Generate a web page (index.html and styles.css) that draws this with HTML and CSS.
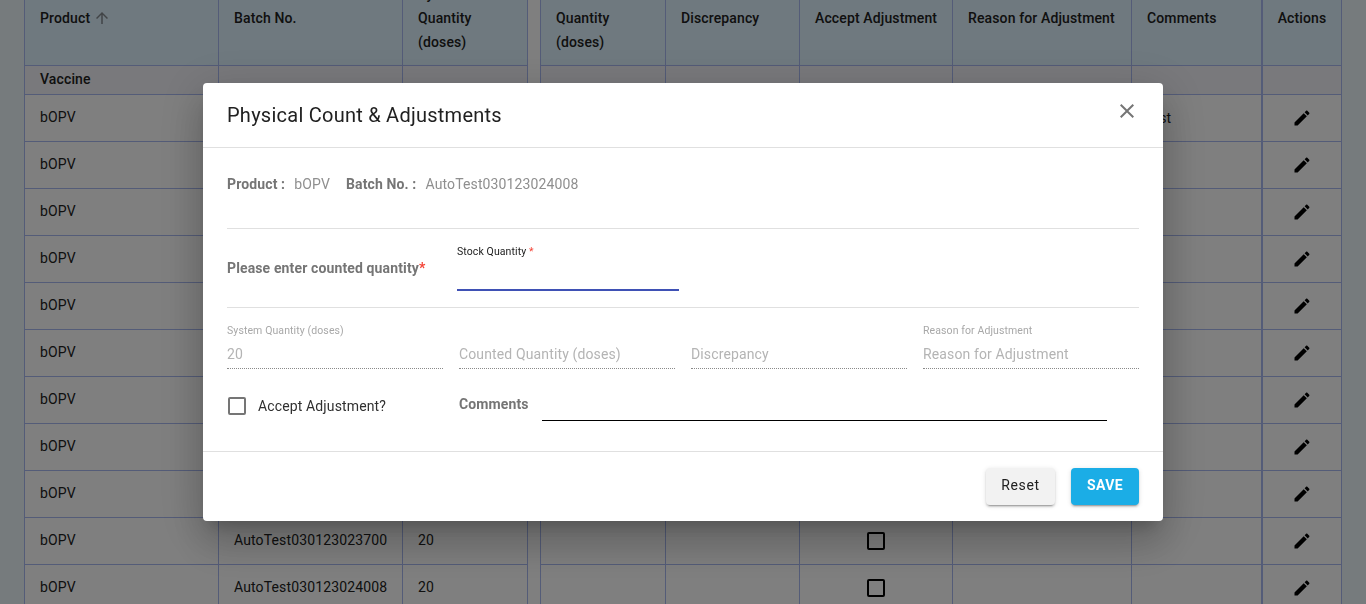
FILE: index.html
```html
<!DOCTYPE html>
<html lang="en">
<head>
<meta charset="utf-8">
<title>Physical Count &amp; Adjustments</title>
<link rel="stylesheet" href="styles.css">
</head>
<body>
<main class="sheet">
  <table class="grid grid-left">
    <colgroup><col class="c-product"><col class="c-batch"><col class="c-qty"></colgroup>
    <thead><tr>
      <th>Product <svg class="sort" viewBox="0 0 24 24"><path d="M4 12l1.41 1.41L11 7.83V20h2V7.83l5.58 5.59L20 12l-8-8-8 8z"/></svg></th>
      <th>Batch No.</th>
      <th class="tall">System<br>Quantity<br>(doses)</th>
    </tr></thead>
    <tbody>
      <tr class="group"><td>Vaccine</td><td></td><td></td></tr>
      <tr><td>bOPV</td><td>AutoTest030123021500</td><td>20</td></tr>
      <tr><td>bOPV</td><td>AutoTest030123021700</td><td>20</td></tr>
      <tr><td>bOPV</td><td>AutoTest030123021900</td><td>20</td></tr>
      <tr><td>bOPV</td><td>AutoTest030123022100</td><td>20</td></tr>
      <tr><td>bOPV</td><td>AutoTest030123022300</td><td>20</td></tr>
      <tr><td>bOPV</td><td>AutoTest030123022500</td><td>20</td></tr>
      <tr><td>bOPV</td><td>AutoTest030123022900</td><td>20</td></tr>
      <tr><td>bOPV</td><td>AutoTest030123023100</td><td>20</td></tr>
      <tr><td>bOPV</td><td>AutoTest030123023400</td><td>20</td></tr>
      <tr><td>bOPV</td><td>AutoTest030123023700</td><td>20</td></tr>
      <tr><td>bOPV</td><td>AutoTest030123024008</td><td>20</td></tr>
    </tbody>
  </table>
  <table class="grid grid-mid">
    <colgroup><col class="c-counted"><col class="c-disc"><col class="c-accept"><col class="c-reason"><col class="c-comments"></colgroup>
    <thead><tr>
      <th class="tall">Counted<br>Quantity<br>(doses)</th>
      <th>Discrepancy</th>
      <th>Accept Adjustment</th>
      <th>Reason for Adjustment</th>
      <th>Comments</th>
    </tr></thead>
    <tbody>
      <tr class="group"><td></td><td></td><td></td><td></td><td></td></tr>
      <tr><td></td><td></td><td class="mid"><input class="tick" type="checkbox"></td><td></td><td>test</td></tr>
      <tr><td></td><td></td><td class="mid"><input class="tick" type="checkbox"></td><td></td><td></td></tr>
      <tr><td></td><td></td><td class="mid"><input class="tick" type="checkbox"></td><td></td><td></td></tr>
      <tr><td></td><td></td><td class="mid"><input class="tick" type="checkbox"></td><td></td><td></td></tr>
      <tr><td></td><td></td><td class="mid"><input class="tick" type="checkbox"></td><td></td><td></td></tr>
      <tr><td></td><td></td><td class="mid"><input class="tick" type="checkbox"></td><td></td><td></td></tr>
      <tr><td></td><td></td><td class="mid"><input class="tick" type="checkbox"></td><td></td><td></td></tr>
      <tr><td></td><td></td><td class="mid"><input class="tick" type="checkbox"></td><td></td><td></td></tr>
      <tr><td></td><td></td><td class="mid"><input class="tick" type="checkbox"></td><td></td><td></td></tr>
      <tr><td></td><td></td><td class="mid"><input class="tick" type="checkbox"></td><td></td><td></td></tr>
      <tr><td></td><td></td><td class="mid"><input class="tick" type="checkbox"></td><td></td><td></td></tr>
    </tbody>
  </table>
  <table class="grid grid-right">
    <thead><tr><th class="mid">Actions</th></tr></thead>
    <tbody>
      <tr class="group"><td></td></tr>
      <tr><td class="mid"><svg class="pen" viewBox="0 0 24 24"><path d="M3 17.25V21h3.75L17.81 9.94l-3.75-3.75L3 17.25zM20.71 7.04c.39-.39.39-1.02 0-1.41l-2.34-2.34c-.39-.39-1.02-.39-1.41 0l-1.83 1.83 3.75 3.75 1.83-1.83z"/></svg></td></tr>
      <tr><td class="mid"><svg class="pen" viewBox="0 0 24 24"><path d="M3 17.25V21h3.75L17.81 9.94l-3.75-3.75L3 17.25zM20.71 7.04c.39-.39.39-1.02 0-1.41l-2.34-2.34c-.39-.39-1.02-.39-1.41 0l-1.83 1.83 3.75 3.75 1.83-1.83z"/></svg></td></tr>
      <tr><td class="mid"><svg class="pen" viewBox="0 0 24 24"><path d="M3 17.25V21h3.75L17.81 9.94l-3.75-3.75L3 17.25zM20.71 7.04c.39-.39.39-1.02 0-1.41l-2.34-2.34c-.39-.39-1.02-.39-1.41 0l-1.83 1.83 3.75 3.75 1.83-1.83z"/></svg></td></tr>
      <tr><td class="mid"><svg class="pen" viewBox="0 0 24 24"><path d="M3 17.25V21h3.75L17.81 9.94l-3.75-3.75L3 17.25zM20.71 7.04c.39-.39.39-1.02 0-1.41l-2.34-2.34c-.39-.39-1.02-.39-1.41 0l-1.83 1.83 3.75 3.75 1.83-1.83z"/></svg></td></tr>
      <tr><td class="mid"><svg class="pen" viewBox="0 0 24 24"><path d="M3 17.25V21h3.75L17.81 9.94l-3.75-3.75L3 17.25zM20.71 7.04c.39-.39.39-1.02 0-1.41l-2.34-2.34c-.39-.39-1.02-.39-1.41 0l-1.83 1.83 3.75 3.75 1.83-1.83z"/></svg></td></tr>
      <tr><td class="mid"><svg class="pen" viewBox="0 0 24 24"><path d="M3 17.25V21h3.75L17.81 9.94l-3.75-3.75L3 17.25zM20.71 7.04c.39-.39.39-1.02 0-1.41l-2.34-2.34c-.39-.39-1.02-.39-1.41 0l-1.83 1.83 3.75 3.75 1.83-1.83z"/></svg></td></tr>
      <tr><td class="mid"><svg class="pen" viewBox="0 0 24 24"><path d="M3 17.25V21h3.75L17.81 9.94l-3.75-3.75L3 17.25zM20.71 7.04c.39-.39.39-1.02 0-1.41l-2.34-2.34c-.39-.39-1.02-.39-1.41 0l-1.83 1.83 3.75 3.75 1.83-1.83z"/></svg></td></tr>
      <tr><td class="mid"><svg class="pen" viewBox="0 0 24 24"><path d="M3 17.25V21h3.75L17.81 9.94l-3.75-3.75L3 17.25zM20.71 7.04c.39-.39.39-1.02 0-1.41l-2.34-2.34c-.39-.39-1.02-.39-1.41 0l-1.83 1.83 3.75 3.75 1.83-1.83z"/></svg></td></tr>
      <tr><td class="mid"><svg class="pen" viewBox="0 0 24 24"><path d="M3 17.25V21h3.75L17.81 9.94l-3.75-3.75L3 17.25zM20.71 7.04c.39-.39.39-1.02 0-1.41l-2.34-2.34c-.39-.39-1.02-.39-1.41 0l-1.83 1.83 3.75 3.75 1.83-1.83z"/></svg></td></tr>
      <tr><td class="mid"><svg class="pen" viewBox="0 0 24 24"><path d="M3 17.25V21h3.75L17.81 9.94l-3.75-3.75L3 17.25zM20.71 7.04c.39-.39.39-1.02 0-1.41l-2.34-2.34c-.39-.39-1.02-.39-1.41 0l-1.83 1.83 3.75 3.75 1.83-1.83z"/></svg></td></tr>
      <tr><td class="mid"><svg class="pen" viewBox="0 0 24 24"><path d="M3 17.25V21h3.75L17.81 9.94l-3.75-3.75L3 17.25zM20.71 7.04c.39-.39.39-1.02 0-1.41l-2.34-2.34c-.39-.39-1.02-.39-1.41 0l-1.83 1.83 3.75 3.75 1.83-1.83z"/></svg></td></tr>
    </tbody>
  </table>
</main>

<div class="backdrop">
  <section class="dialog" role="dialog" aria-label="Physical Count &amp; Adjustments">
    <header class="dialog-head">
      <h2 class="dialog-title">Physical Count &amp; Adjustments</h2>
      <svg class="close" viewBox="0 0 24 24"><path d="M19 6.41L17.59 5 12 10.59 6.41 5 5 6.41 10.59 12 5 17.59 6.41 19 12 13.41 17.59 19 19 17.59 13.41 12z"/></svg>
    </header>
    <div class="dialog-body">
      <div class="info-row">
        <b class="key">Product :</b><span class="val">bOPV</span>
        <b class="key">Batch No. :</b><span class="val">AutoTest030123024008</span>
      </div>
      <div class="count-row">
        <div class="count-label">Please enter counted quantity<span class="req">*</span></div>
        <label class="stock">
          <span class="stock-label">Stock Quantity <span class="req-light">*</span></span>
          <input class="stock-input" type="text">
        </label>
      </div>
      <div class="fields">
        <div class="field"><span class="field-label">System Quantity (doses)</span><span class="field-value">20</span></div>
        <div class="field"><span class="field-label"></span><span class="field-value">Counted Quantity (doses)</span></div>
        <div class="field"><span class="field-label"></span><span class="field-value">Discrepancy</span></div>
        <div class="field"><span class="field-label">Reason for Adjustment</span><span class="field-value">Reason for Adjustment</span></div>
      </div>
      <div class="accept-row">
        <label class="accept"><input class="tick tick-grey" type="checkbox"><span>Accept Adjustment?</span></label>
        <b class="comments-label">Comments</b>
        <input class="comments-input" type="text">
      </div>
    </div>
    <footer class="dialog-foot">
      <button class="btn btn-reset" type="button">Reset</button>
      <button class="btn btn-save" type="button">SAVE</button>
    </footer>
  </section>
</div>
</body>
</html>
```
FILE: styles.css
```css
* { box-sizing: border-box; }
html, body { margin: 0; height: 100%; overflow: hidden; }
body {
  background: #ecf6fb;
  font-family: Roboto, "Liberation Sans", sans-serif;
  font-size: 14px;
  letter-spacing: .13px;
  color: #212121;
}

/* background tables, scrolled slightly */
.sheet {
  display: flex;
  align-items: flex-start;
  width: 1318px;
  margin: -18px 24px 0;
  background: #fff;
}
.grid {
  flex: none;
  table-layout: fixed;
  border-collapse: separate;
  border-spacing: 0;
  border-left: 1px solid #a8b8f0;
}
.grid-left { width: 504px; margin-right: 12px; }
.grid-mid { width: 722px; }
.grid-right { width: 80px; }
.c-product { width: 194px; }
.c-batch { width: 184px; }
.c-qty { width: 125px; }
.c-counted { width: 125px; }
.c-disc { width: 134px; }
.c-accept { width: 153px; }
.c-reason { width: 179px; }
.c-comments { width: 130px; }

.grid th, .grid td {
  border-right: 1px solid #a8b8f0;
  border-bottom: 1px solid #a8b8f0;
  padding: 0 0 0 15px;
  text-align: left;
  overflow: hidden;
  white-space: nowrap;
}
.grid th {
  height: 84px;
  padding-top: 24px;
  vertical-align: top;
  background: #dff2fe;
  font-weight: 500;
  line-height: 24px;
  color: #212121;
}
.grid th.tall { padding-top: 0; }
.grid td { height: 47px; vertical-align: middle; line-height: 20px; }
.grid-left td { padding-bottom: 2px; }
.grid .group td { height: 29px; background: #f2f2f8; font-weight: 500; }
.grid th.mid, .grid td.mid { padding: 0; text-align: center; }
.grid th.mid { padding-top: 24px; }

.sort { width: 18px; height: 18px; margin-left: -1px; vertical-align: -4px; fill: #83898e; }
.pen { display: block; width: 20px; height: 20px; margin: 0 auto; fill: #000; }

.tick {
  appearance: none;
  display: block;
  width: 18px;
  height: 18px;
  margin: 0 auto;
  border: 2px solid #000;
  border-radius: 2px;
  background: transparent;
}
.tick-grey { margin: 0; border-color: #757575; }

/* modal */
.backdrop {
  position: fixed;
  inset: 0;
  display: flex;
  align-items: center;
  justify-content: center;
  background: rgba(0, 0, 0, .5);
}
.dialog {
  width: 960px;
  height: 438px;
  background: #fff;
  border-radius: 4px;
  box-shadow: 0 11px 15px -7px rgba(0,0,0,.2), 0 24px 38px 3px rgba(0,0,0,.14), 0 9px 46px 8px rgba(0,0,0,.12);
  display: flex;
  flex-direction: column;
}
.dialog-head {
  display: flex;
  align-items: flex-start;
  justify-content: space-between;
  height: 65px;
  padding: 16px 24px 0;
  border-bottom: 1px solid #e0e0e0;
}
.dialog-title {
  margin: 0;
  font-size: 20px;
  font-weight: 400;
  line-height: 32px;
  letter-spacing: .25px;
  color: #212121;
}
.close { width: 24px; height: 24px; fill: #757575; }

.dialog-body { flex: 1; padding: 0 24px; }
.info-row {
  display: flex;
  height: 81px;
  padding-top: 26px;
  line-height: 20px;
  border-bottom: 1px solid #e0e0e0;
}
.key { font-weight: 700; color: #757575; margin-right: 9px; }
.val { color: #8f8f8f; margin-right: 16px; }

.count-row {
  display: flex;
  height: 79px;
  border-bottom: 1px solid #e0e0e0;
}
.count-label {
  width: 230px;
  padding-top: 29px;
  line-height: 20px;
  font-weight: 700;
  color: #757575;
}
.req { color: #f44336; }
.stock { display: flex; flex-direction: column; width: 222px; }
.stock-label {
  height: 32px;
  padding-top: 16px;
  font-size: 10.5px;
  line-height: 14px;
  letter-spacing: .1px;
  color: #212121;
}
.req-light { color: #f44336; }
.stock-input {
  height: 30px;
  border: 0;
  border-bottom: 2px solid #3f51b5;
  outline: 0;
  background: none;
}

.fields {
  display: grid;
  grid-template-columns: repeat(4, 1fr);
  gap: 16px;
  padding-top: 16px;
}
.field {
  display: flex;
  flex-direction: column;
  height: 45px;
  border-bottom: 1px dotted #8a8a8a;
}
.field-label {
  height: 14px;
  font-size: 10.5px;
  line-height: 14px;
  letter-spacing: .1px;
  color: #a8a8a8;
}
.field-value {
  margin-top: 4px;
  line-height: 24px;
  color: #b4b4b4;
}

.accept-row {
  display: flex;
  align-items: flex-start;
  margin-top: 19px;
  height: 40px;
}
.accept {
  display: flex;
  align-items: center;
  gap: 12px;
  width: 232px;
  padding: 8px 0 0 1px;
  line-height: 20px;
  color: #303030;
}
.comments-label {
  width: 83px;
  padding-top: 6px;
  line-height: 20px;
  font-weight: 700;
  color: #757575;
}
.comments-input {
  width: 565px;
  height: 33px;
  border: 0;
  border-bottom: 1px solid #000;
  outline: 0;
  background: none;
}

.dialog-foot {
  display: flex;
  justify-content: flex-end;
  gap: 16px;
  height: 70px;
  padding: 16px 24px;
  border-top: 1px solid #e0e0e0;
}
.btn {
  height: 37px;
  border: 0;
  border-radius: 4px;
  font-family: inherit;
  font-size: 14px;
  font-weight: 500;
  letter-spacing: .4px;
  box-shadow: 0 3px 1px -2px rgba(0,0,0,.2), 0 2px 2px 0 rgba(0,0,0,.14), 0 1px 5px 0 rgba(0,0,0,.12);
  padding: 0 0 3px;
}
.btn-reset { width: 69px; background: #f2f2f2; color: #212121; font-weight: 400; letter-spacing: .65px; }
.btn-save { width: 68px; background: #1bade6; color: #fff; font-weight: 700; }
```
